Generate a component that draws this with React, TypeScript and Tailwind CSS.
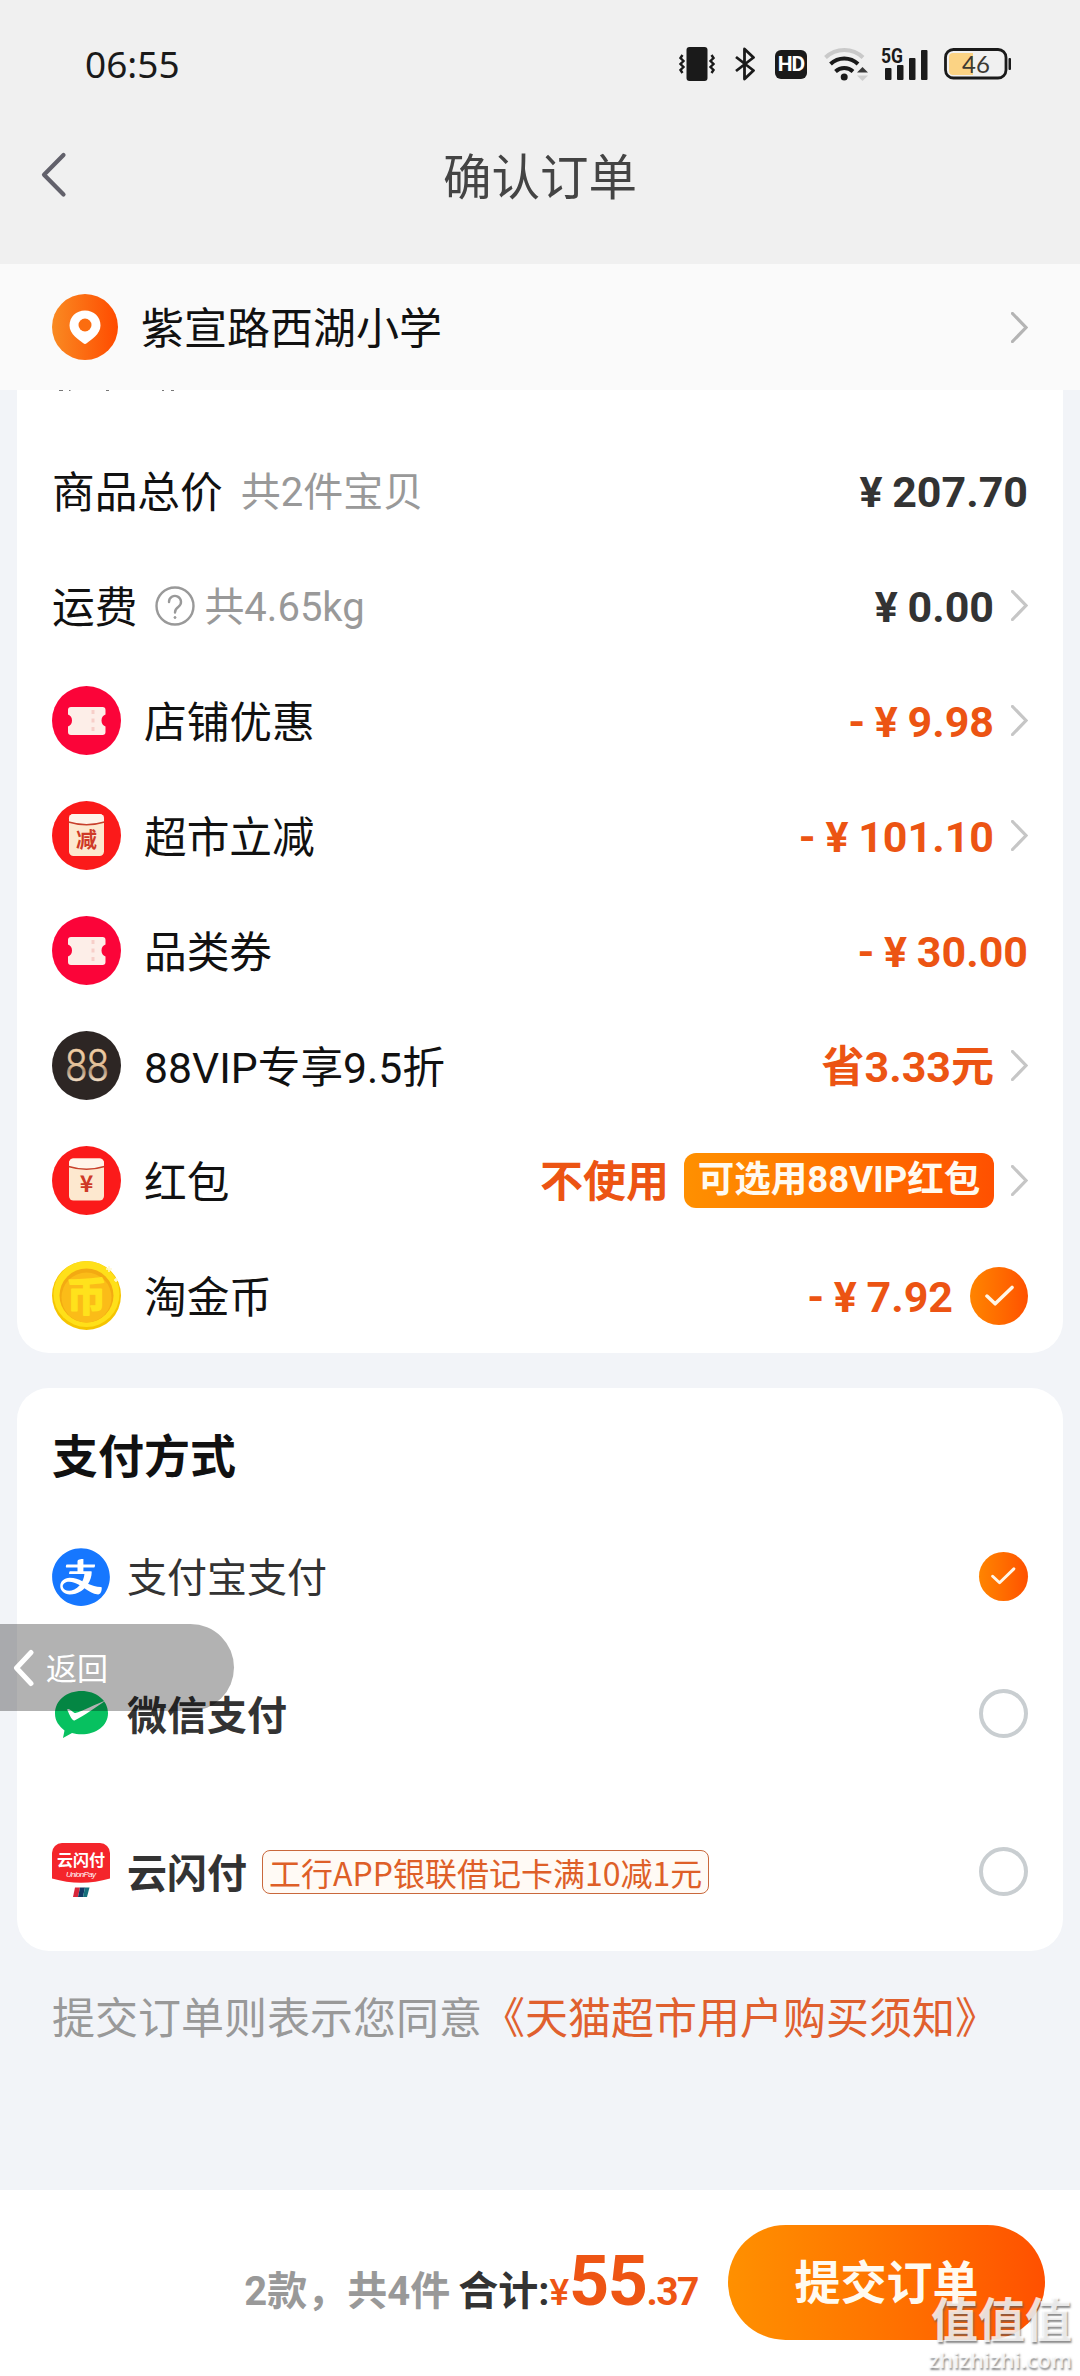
import type { ReactNode } from "react";
import { AiFillAlipayCircle } from "react-icons/ai";

type Row = {
  label: string;
  icon?: ReactNode;
  note?: string;
  help?: boolean;
  value: string;
  badge?: string;
  dark?: boolean;
  end?: "arrow" | "check";
};

function Chevron({ className }: { className: string }) {
  return (
    <svg viewBox="0 0 17 31" className={`h-[31px] w-[17px] shrink-0 ${className}`} fill="none" stroke="currentColor" strokeWidth="3.2">
      <path d="M1.5 1.5 15 15.5 1.5 29.5" strokeLinecap="round" />
    </svg>
  );
}

function CheckCircle({ className }: { className: string }) {
  return (
    <span className={`flex shrink-0 items-center justify-center rounded-full bg-linear-to-r from-[#ff8400] to-[#ff5000] ${className}`}>
      <svg viewBox="0 0 30 24" className="w-1/2" fill="none" stroke="#fff6e8" strokeWidth="3.6" strokeLinecap="round" strokeLinejoin="round">
        <path d="M2 12.5 10.5 20.5 28 3.5" />
      </svg>
    </span>
  );
}

function TicketIcon() {
  return (
    <svg viewBox="0 0 69 69" className="h-[69px] w-[69px]">
      <circle cx="34.5" cy="34.5" r="34.5" fill="#fb0439" />
      <path
        d="M19 21h31.5a3 3 0 0 1 3 3v4.500a6.500 6.500 0 0 0 0 12V46a3 3 0 0 1-3 3H19a3 3 0 0 1-3-3v-5.500a6.500 6.500 0 0 0 0-12V24a3 3 0 0 1 3-3z"
        fill="#fdeee8"
      />
      <path d="M41 24v22" stroke="#f7cfc9" strokeWidth="3" strokeDasharray="4 4.5" />
    </svg>
  );
}

function PacketIcon({ char, top }: { char: string; top: number }) {
  return (
    <svg viewBox="0 0 69 69" className="h-[69px] w-[69px]">
      <circle cx="34.5" cy="34.5" r="34.5" fill="#fb1a1a" />
      <g transform={`translate(0 ${top})`}>
        <rect x="17" y="0" width="35" height="42" rx="4.5" fill="#fde8cf" />
        <path d="M17 4.500a4.500 4.500 0 0 1 4.500-4.500h26a4.500 4.500 0 0 1 4.500 4.500V8q-17.500 5-35 0z" fill="#fff4ea" />
        <path d="M16.5 8q18 5.500 36 0" fill="none" stroke="#c8402c" strokeWidth="1.6" />
        <text
          x="34.5"
          y={char === "减" ? 32.5 : 33}
          textAnchor="middle"
          fill="#cf3a27"
          className={`font-['Noto_Sans_CJK_SC',sans-serif] font-bold ${char === "减" ? "text-[21px]" : "text-[23px]"}`}
        >
          {char}
        </text>
      </g>
    </svg>
  );
}

function VipIcon() {
  return (
    <svg viewBox="0 0 69 69" className="h-[69px] w-[69px]">
      <defs>
        <linearGradient id="gold" x1="0" y1="0" x2="0" y2="1">
          <stop offset="0.2" stopColor="#efcda4" />
          <stop offset="0.5" stopColor="#e2bf98" />
          <stop offset="0.58" stopColor="#b09478" />
          <stop offset="0.8" stopColor="#f8e4ca" />
        </linearGradient>
      </defs>
      <circle cx="34.5" cy="34.5" r="34.5" fill="#2d2624" />
      <text
        x="35"
        y="50"
        textAnchor="middle"
        textLength="43"
        lengthAdjust="spacingAndGlyphs"
        fill="url(#gold)"
        stroke="url(#gold)"
        strokeWidth="0.7"
        className="font-['Roboto',sans-serif] text-[44px] font-light"
      >
        88
      </text>
    </svg>
  );
}

function CoinIcon() {
  return (
    <svg viewBox="0 0 69 69" className="h-[69px] w-[69px]">
      <circle cx="34.5" cy="34.5" r="34.5" fill="#f5c400" />
      <circle cx="34.5" cy="33" r="33" fill="#ffe019" />
      <circle cx="34.5" cy="34.5" r="27" fill="#f3aa12" />
      <circle cx="34.5" cy="36.5" r="25" fill="#fbbc18" />
      <text
        x="34.5"
        y="49.5"
        textAnchor="middle"
        fill="#ffe21c"
        stroke="#ffe21c"
        strokeWidth="1.5"
        strokeLinejoin="round"
        className="font-['Noto_Sans_CJK_SC',sans-serif] text-[40px] font-bold"
      >
        币
      </text>
      <path d="M57 5v6M54 8h6M64 17v4M62 19h4" stroke="#fff8d0" strokeWidth="1.5" />
    </svg>
  );
}

const rows: Row[] = [
  { label: "商品总价", note: "共2件宝贝", value: "¥ 207.70", dark: true },
  { label: "运费", note: "共4.65kg", help: true, value: "¥ 0.00", dark: true, end: "arrow" },
  { label: "店铺优惠", icon: <TicketIcon />, value: "- ¥ 9.98", end: "arrow" },
  { label: "超市立减", icon: <PacketIcon char="减" top={13} />, value: "- ¥ 101.10", end: "arrow" },
  { label: "品类券", icon: <TicketIcon />, value: "- ¥ 30.00" },
  { label: "88VIP专享9.5折", icon: <VipIcon />, value: "省3.33元", end: "arrow" },
  { label: "红包", icon: <PacketIcon char="¥" top={12.5} />, value: "不使用", badge: "可选用88VIP红包", end: "arrow" },
  { label: "淘金币", icon: <CoinIcon />, value: "- ¥ 7.92", end: "check" },
];

function StatusBar() {
  return (
    <div className="flex h-[130px] items-center justify-between pr-[68px] pl-[85px] text-[#1a1a1a]">
      <span className="pb-[3px] font-['Noto_Sans',sans-serif] text-[37px] leading-none">06:55</span>
      <div className="flex items-center pb-0.5">
        <svg viewBox="0 0 36 34" className="mr-5 h-[34px] w-9">
          <rect x="7.5" y="0" width="21" height="34" rx="3" fill="currentColor" />
          <path d="M3.5 8 1.500 11l3 3-3 3 3 3-3 3 2 3M32.500 8l2 3-3 3 3 3-3 3 3 3-2 3" fill="none" stroke="currentColor" strokeWidth="2.4" />
        </svg>
        <svg viewBox="0 0 20 34" className="mr-5 h-[34px] w-5" fill="none" stroke="currentColor" strokeWidth="2.8" strokeLinejoin="round">
          <path d="M1 10 18.500 23.500 9.500 32V2l9 8.500L1 24" />
        </svg>
        <span className="mr-[17px] flex h-[29px] w-8 items-center justify-center rounded-md bg-[#1a1a1a] font-['Roboto',sans-serif] text-[21px] leading-none font-bold tracking-tighter text-white">
          HD
        </span>
        <svg viewBox="0 0 44 34" className="mr-[13px] h-[34px] w-11" fill="none" strokeWidth="4">
          <path d="M1.500 10.500a27 27 0 0 1 37.500 0" stroke="#c9c9c9" />
          <path d="M6.500 17a20 20 0 0 1 27.500 0M11.500 24.500a13 13 0 0 1 17.500 0" stroke="currentColor" />
          <circle cx="20.2" cy="30" r="3.5" fill="currentColor" />
          <path d="M33 25.500 38.500 20l5.500 5.500z" fill="#3a3a3a" />
          <path d="M33 28.500h11L38.500 34z" fill="#cfcfcf" />
        </svg>
        <svg viewBox="0 0 47 34" className="mr-4 h-[34px] w-[47px] overflow-visible" fill="currentColor">
          <text x="0" y="15.5" textLength="22" lengthAdjust="spacingAndGlyphs" className="font-['Roboto',sans-serif] text-[20px] font-bold">
            5G
          </text>
          <rect x="4" y="21" width="6.5" height="12" rx="1" />
          <rect x="16" y="18" width="6.5" height="15" rx="1" />
          <rect x="28" y="11" width="6.5" height="22" rx="1" />
          <rect x="40" y="3" width="6.5" height="30" rx="1" />
        </svg>
        <svg viewBox="0 0 68 32" className="h-8 w-[68px]">
          <rect x="1.5" y="1.5" width="60.5" height="28.5" rx="8" fill="none" stroke="currentColor" strokeWidth="2.8" />
          <path d="M9 5h20v22H9a4 4 0 0 1-4-4V9a4 4 0 0 1 4-4z" fill="#fbd384" />
          <rect x="64.5" y="10" width="2.5" height="12" rx="1" fill="currentColor" />
          <text x="32" y="24.5" textAnchor="middle" fill="#3d3a33" className="font-['Lato',sans-serif] text-[24px]">
            46
          </text>
        </svg>
      </div>
    </div>
  );
}

function PriceRow({ row }: { row: Row }) {
  return (
    <div className="flex h-[115px] items-center">
      {row.icon && <span className="mr-[23px] shrink-0">{row.icon}</span>}
      <span className="pt-1 text-[42.7px] leading-[60px] text-[#111]">{row.label}</span>
      {row.help && (
        <svg viewBox="0 0 40 40" className="ml-[18px] h-10 w-10" fill="none" stroke="#999" strokeWidth="2.4">
          <circle cx="20" cy="20" r="18.5" />
          <path d="M14 16a6 6 0 1 1 9.500 4.800c-2.500 1.800-3.500 3-3.500 5.700" strokeLinecap="round" />
          <circle cx="20" cy="31.5" r="1" fill="#999" strokeWidth="1" />
        </svg>
      )}
      {row.note && <span className={`pt-[5px] text-[40px] leading-[60px] text-[#999] ${row.help ? "ml-[9px]" : "ml-[18px]"}`}>{row.note}</span>}
      <div className="ml-auto flex items-center">
        <span className={`pt-0.5 text-[43px] leading-[60px] font-bold [word-spacing:-1px] ${row.dark ? "text-[#333]" : "text-[#ec5413]"}`}>
          {row.value}
        </span>
        {row.badge && (
          <span className="ml-[15px] flex h-[55px] w-[310px] items-center justify-center rounded-xl bg-linear-to-r from-[#ff9000] to-[#ff5000] text-[36.5px] leading-none font-bold text-[#fffaf0]">
            {row.badge}
          </span>
        )}
        {row.end === "arrow" && <Chevron className="ml-[17px] text-[#c6c6c6]" />}
        {row.end === "check" && <CheckCircle className="ml-[17px] h-[58px] w-[58px]" />}
      </div>
    </div>
  );
}

function WechatPayIcon() {
  return (
    <svg viewBox="0 0 58 58" className="h-[58px] w-[58px]">
      <path d="M29.500 6C15 6 3 15 3 28.500 3 36 7 41 12.500 45.500L11 53l9-5c3 1 6 1.300 9.500 1.300C44 49.300 56 41 56 28S44 6 29.500 6z" fill="#07c160" />
      <path d="M15 24.500c2-2 4.500 1.500 7.500 3.500 3 .5 9-3.500 31-12.500C45 21.500 32 31 22.500 35.500c-2.500.5-4.500-5-7.500-11z" fill="#fff" />
    </svg>
  );
}

function UnionPayIcon() {
  return (
    <svg viewBox="0 0 58 58" className="mb-1 h-[58px] w-[58px] shrink-0">
      <path d="M10 2h38a10 10 0 0 1 10 10v25.500Q29 46 0 37.500V12A10 10 0 0 1 10 2z" fill="#f4252b" />
      <text x="29" y="25" textAnchor="middle" textLength="48" lengthAdjust="spacingAndGlyphs" fill="#fff" className="font-['Noto_Sans_CJK_SC',sans-serif] text-[16px] font-bold">
        云闪付
      </text>
      <text x="29" y="36" textAnchor="middle" fill="#fff" className="font-['Liberation_Sans',sans-serif] text-[8px] italic" textLength="30">
        UnionPay
      </text>
      <path d="M23 46.500h5L26 56h-5z" fill="#d8263a" />
      <path d="M28 46.500h5L31 56h-5z" fill="#123a66" />
      <path d="M33 46.500h4.500L35 56h-4z" fill="#15707c" />
    </svg>
  );
}

function PayOption({ icon, name, tag, checked, className }: { icon: ReactNode; name: string; tag?: string; checked?: boolean; className: string }) {
  return (
    <div className={`flex h-[58px] items-center ${className}`}>
      <span className="flex h-[58px] w-[58px] shrink-0 items-center justify-center">{icon}</span>
      <span className={`ml-[17px] text-[40px] leading-[58px] text-[#333] ${checked ? "pt-[3px]" : "pt-1.5 font-bold"}`}>{name}</span>
      {tag && (
        <span className="ml-[15px] flex h-11 items-center rounded-lg border-[1.5px] border-[#c9683c] bg-[#fffaf5] px-1.5 font-['Noto_Sans_CJK_SC',sans-serif] text-[32px] leading-none text-[#de5f28]">
          {tag}
        </span>
      )}
      {checked ? <CheckCircle className="mb-0.5 ml-auto h-[49px] w-[49px]" /> : <span className="mb-0.5 ml-auto h-[49px] w-[49px] rounded-full border-[4.5px] border-[#c9ced1]" />}
    </div>
  );
}

export default function App() {
  return (
    <div className="relative flex h-[2376px] w-[1080px] flex-col overflow-hidden bg-[#f2f4f8] font-['Roboto','Noto_Sans_CJK_SC',sans-serif]">
      <header className="h-[264px] bg-[#f0f0f0]">
        <StatusBar />
        <div className="flex h-[94px] items-center">
          <svg viewBox="0 0 26 46" className="mb-1 ml-[41px] h-[46px] w-[26px]" fill="none" stroke="#62616b" strokeWidth="4.2" strokeLinecap="round" strokeLinejoin="round">
            <path d="M22.500 3 3 22.800 22.500 42.500" />
          </svg>
          <h1 className="mr-[67px] flex-1 pt-1 text-center text-[48.5px] leading-none text-[#444]">确认订单</h1>
        </div>
      </header>

      <section className="flex h-[126px] items-center bg-[#fafafa] px-[52px]">
        <svg viewBox="0 0 66 66" className="h-[66px] w-[66px]">
          <defs>
            <linearGradient id="pin">
              <stop offset="0" stopColor="#f98a22" />
              <stop offset="1" stopColor="#ff4b00" />
            </linearGradient>
          </defs>
          <circle cx="33" cy="33" r="33" fill="url(#pin)" />
          <path d="M33 16.500c9 0 15.500 6.500 15.500 15 0 9-10 14.500-13.500 17.500-1.500 1.200-2.500 1.200-4 0-3.500-3-13.500-8.500-13.500-17.500 0-8.500 6.500-15 15.500-15z" fill="#fff" />
          <circle cx="33" cy="31" r="6.5" fill="#fb6d10" />
        </svg>
        <span className="ml-[23px] pt-1 text-[43px] leading-[60px] text-[#111]">紫宣路西湖小学</span>
        <Chevron className="ml-auto text-[#b4b4b4]" />
      </section>

      <section className="mx-[17px] rounded-b-[32px] bg-white px-[35px]">
        <div className="h-[43px]">
          {/* tops of the line scrolled under the address bar */}
          <svg viewBox="0 0 130 2" className="h-0.5 w-[130px]" stroke="#777" strokeWidth="1">
            <path d="M7 .5h4M17 .5h1.500M54 .5h3M110 .5h2M119 .5h3" />
          </svg>
        </div>
        {rows.map((row) => (
          <PriceRow key={row.label} row={row} />
        ))}
      </section>

      <section className="mx-[17px] mt-[35px] h-[563px] rounded-[32px] bg-white px-[35px] pt-[38px]">
        <h2 className="text-[46px] leading-[62px] font-bold text-[#111]">支付方式</h2>
        <PayOption className="mt-[60px]" icon={<AiFillAlipayCircle className="h-[66px] w-[66px] shrink-0 text-[#1677ff]" />} name="支付宝支付" checked />
        <PayOption className="mt-[79px]" icon={<WechatPayIcon />} name="微信支付" />
        <PayOption className="mt-[100px]" icon={<UnionPayIcon />} name="云闪付" tag="工行APP银联借记卡满10减1元" />
      </section>

      <p className="mt-[38px] pl-[52px] text-[43px] leading-[60px] text-[#999]">
        提交订单则表示您同意<span className="text-[#e0602e]">《天猫超市用户购买须知》</span>
      </p>

      <footer className="mt-auto flex h-[186px] bg-white pt-[35px] pr-[35px]">
        <div className="ml-auto flex h-[115px] items-baseline pt-[21px] text-[40px] leading-[60px] font-bold">
          <span className="text-[#999]">2款，共4件</span>
          <span className="ml-2 text-[#333]">合计:</span>
          <span className="text-[#ee5514]">
            <span className="text-[37px] font-medium">¥</span>
            <span className="text-[70px] leading-none tracking-[-1.5px]">55</span>
            <span className="text-[39px] tracking-[-1.5px]">.37</span>
          </span>
        </div>
        <button className="ml-[30px] h-[115px] w-[317px] rounded-full bg-linear-to-r from-[#ff9000] to-[#ff5000] text-[46px] leading-none font-bold text-[#fffaf0]">
          提交订单
        </button>
      </footer>

      {/* floating back pill */}
      <div className="absolute top-[1624px] left-0 flex h-[87px] w-[234px] items-center rounded-r-full bg-black/30 pl-[13px] text-white">
        <svg viewBox="0 0 22 38" className="h-[38px] w-[22px]" fill="none" stroke="currentColor" strokeWidth="5" strokeLinecap="round" strokeLinejoin="round">
          <path d="M18 3.500 3.500 19 18 34.500" />
        </svg>
        <span className="ml-[11px] pt-1 text-[31px] leading-none">返回</span>
      </div>

      <div className="absolute right-2 bottom-1 flex flex-col items-end text-white/80 [text-shadow:1px_2px_2px_rgb(90_90_90/0.7)]">
        <span className="text-[47px] leading-[50px] font-bold">值值值</span>
        <span className="font-['Open_Sans',sans-serif] text-[22px] leading-[26px] font-semibold">zhizhizhi.com</span>
      </div>
    </div>
  );
}
